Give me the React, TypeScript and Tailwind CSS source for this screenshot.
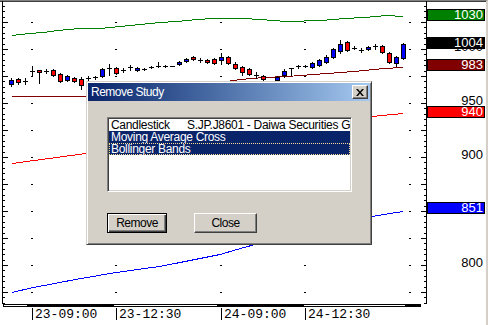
import React from "react";

type Kind = "u" | "d" | "x";
type Candle = [number, Kind, number, number, number, number];

// bar index -> x pixel, price -> y pixel (image coordinates)
const px = (i: number) => 11 + 7 * i;
const py = (p: number) => 49 + (1000 - p) * 1.08;

const candles: Candle[] = [
  [0, "u", 80, 84, 78, 86],
  [1, "d", 79, 82, 78, 84],
  [2, "x", 81, 81, 78, 84],
  [3, "x", 71, 71, 66, 75],
  [4, "d", 70, 72, 70, 83],
  [5, "x", 71, 71, 69, 73],
  [6, "d", 70, 75, 69, 76],
  [7, "d", 74, 81, 73, 82],
  [8, "u", 76, 80, 75, 81],
  [9, "d", 78, 81, 77, 82],
  [10, "d", 79, 85, 77, 89],
  [11, "x", 78, 78, 76, 80],
  [12, "x", 77, 77, 76, 79],
  [13, "u", 69, 76, 68, 77],
  [14, "x", 68, 68, 64, 75],
  [15, "d", 68, 73, 67, 74],
  [16, "x", 70, 70, 68, 72],
  [17, "x", 67, 67, 65, 70],
  [18, "u", 68, 70, 67, 71],
  [19, "x", 69, 69, 68, 70],
  [20, "x", 67, 67, 66, 68],
  [21, "x", 66, 66, 62, 67],
  [22, "x", 66, 66, 65, 67],
  [23, "x", 66, 66, 66, 66],
  [24, "u", 62, 64, 61, 65],
  [25, "u", 59, 61, 58, 62],
  [26, "d", 57, 59, 56, 60],
  [27, "x", 60, 60, 58, 62],
  [28, "d", 60, 62, 59, 63],
  [29, "d", 59, 63, 58, 64],
  [30, "u", 57, 60, 53, 64],
  [31, "d", 57, 63, 56, 64],
  [32, "d", 64, 68, 62, 69],
  [33, "d", 67, 72, 66, 75],
  [34, "d", 69, 74, 68, 75],
  [35, "x", 75, 75, 72, 78],
  [36, "d", 76, 79, 75, 80],
  [38, "u", 77, 80, 76, 81],
  [39, "u", 71, 75, 69, 77],
  [40, "x", 68, 68, 68, 75],
  [41, "x", 66, 66, 65, 68],
  [42, "x", 66, 66, 65, 67],
  [43, "u", 63, 67, 62, 68],
  [44, "u", 60, 65, 59, 66],
  [45, "u", 57, 62, 55, 63],
  [46, "u", 49, 57, 48, 58],
  [47, "u", 44, 51, 40, 53],
  [48, "d", 42, 50, 41, 51],
  [49, "x", 48, 48, 46, 49],
  [50, "x", 50, 50, 48, 52],
  [51, "u", 47, 49, 46, 50],
  [52, "x", 46, 46, 44, 49],
  [53, "d", 46, 52, 45, 53],
  [54, "d", 53, 62, 52, 63],
  [55, "u", 57, 63, 56, 66],
  [56, "u", 44, 58, 43, 59],
];

const lines: { color: string; pts: number[][] }[] = [
  {
    color: "#008000",
    pts: [[12, 35], [30, 33], [43, 32], [58, 30], [80, 28], [100, 28], [120, 26], [140, 24], [160, 22], [177, 21], [197, 19], [213, 18], [244, 18], [260, 19], [287, 21], [321, 20], [345, 18], [364, 17], [387, 15], [403, 16]],
  },
  {
    color: "#800000",
    pts: [[12, 96], [86, 96], [150, 92], [200, 85], [240, 79], [264, 77], [287, 76], [327, 73], [354, 71], [384, 68], [403, 67]],
  },
  {
    color: "#ff0000",
    pts: [[12, 163], [86, 153], [200, 138], [300, 125], [372, 116], [403, 113]],
  },
  {
    color: "#0000ff",
    pts: [[12, 292], [33, 287], [50, 284], [70, 280], [87, 277], [110, 273], [137, 269], [160, 266], [180, 262], [200, 258], [220, 254], [244, 247], [270, 240], [300, 232], [340, 222], [372, 216], [390, 213], [403, 211]],
  },
];

const gridX = [32, 116, 221, 305, 410];
const gridY = [22, 49, 76, 103, 130, 157, 184, 211, 238, 265, 292];

const ticks = Array.from({ length: 57 }, (_, k) => k - 9);

// session band along the time axis: [x1, x2, black?]
const band: [number, number, boolean][] = [
  [3, 28, false],
  [28, 113, true],
  [113, 218, false],
  [218, 303, true],
  [303, 406, false],
  [406, 421, true],
];

const axisLabels = [1000, 950, 900, 850, 800];
const markers = [
  { value: 1030, bg: "bg-[#008000]" },
  { value: 1004, bg: "bg-black" },
  { value: 983, bg: "bg-[#800000]" },
  { value: 940, bg: "bg-[#ff0000]" },
  { value: 851, bg: "bg-[#0000ff]" },
];

const timeLabels = [
  { i: 3, text: "23-09:00" },
  { i: 15, text: "23-12:30" },
  { i: 30, text: "24-09:00" },
  { i: 42, text: "24-12:30" },
];

const studies = [
  { name: "Candlestick", detail: "S.JP.J8601 - Daiwa Securities Group", selected: false, focus: false },
  { name: "Moving Average Cross", detail: "", selected: true, focus: false },
  { name: "Bollinger Bands", detail: "", selected: true, focus: true },
];

function ChartCanvas() {
  return (
    <svg width={486} height={307} viewBox="0 1 486 307" className="block" shapeRendering="crispEdges">
      {/* axes */}
      <line x1={2.5} y1={0} x2={2.5} y2={304} stroke="black" />
      <line x1={426.5} y1={0} x2={426.5} y2={304} stroke="black" />
      {ticks.map((t) => {
        const y = Math.round(49 + 5.4 * t) + 0.5;
        const major = t % 5 === 0;
        return (
          <g key={t}>
            <line x1={2} y1={y} x2={major ? 8 : 5} y2={y} stroke="black" />
            <line x1={major ? 421 : 424} y1={y} x2={427} y2={y} stroke="black" />
          </g>
        );
      })}

      {/* grid dots */}
      {gridX.map((x) =>
        gridY.map((y) => <rect key={`${x}-${y}`} x={x - 1} y={y} width={2} height={1} fill="black" />)
      )}

      {/* studies */}
      {lines.map((l) => (
        <polyline
          key={l.color}
          points={l.pts.map((p) => `${p[0]},${p[1] + 0.5}`).join(" ")}
          fill="none"
          stroke={l.color}
          strokeWidth={1}
        />
      ))}

      {/* candles */}
      {candles.map(([i, kind, top, bottom, wt, wb]) => {
        const x = px(i);
        return (
          <g key={i}>
            <line x1={x + 0.5} y1={wt} x2={x + 0.5} y2={wb + 1} stroke="black" />
            {kind === "x" ? (
              <line x1={x - 2} y1={top + 0.5} x2={x + 3} y2={top + 0.5} stroke="black" />
            ) : (
              <rect
                x={x - 1.5}
                y={top + 0.5}
                width={4}
                height={bottom - top}
                fill={kind === "u" ? "#0000ff" : "#ff0000"}
                stroke="black"
              />
            )}
          </g>
        );
      })}

      {/* session band */}
      <rect x={3} y={304} width={418} height={3} fill="black" />
      {band
        .filter((b) => !b[2])
        .map(([x1, x2]) => (
          <rect key={x1} x={x1 + 1} y={305} width={x2 - x1 - 2} height={1} fill="white" />
        ))}
    </svg>
  );
}

function PriceAxis() {
  return (
    <div className="absolute left-[427px] top-0 w-[59px] h-full font-['Liberation_Sans',Arial,sans-serif] text-[13px]">
      {axisLabels.map((v) => (
        <div
          key={v}
          className="absolute left-0 w-[58px] h-[12px] border border-transparent pr-[1px] text-right leading-[10px] text-black"
          style={{ top: py(v) - 9 }}
        >
          {v}
        </div>
      ))}
      {markers.map((m) => (
        <div
          key={m.value}
          className={`absolute left-0 w-[58px] h-[12px] border border-black pr-[1px] text-right leading-[10px] text-white ${m.bg}`}
          style={{ top: Math.round(py(m.value)) - 9 }}
        >
          {m.value}
        </div>
      ))}
    </div>
  );
}

function CloseGlyph() {
  return (
    <svg width="8" height="7" viewBox="0 0 8 7">
      <path d="M0 0h2l2 2.5L6 0h2L5 3.5 8 7H6L4 4.5 2 7H0l3-3.5z" fill="black" />
    </svg>
  );
}

function RemoveStudyDialog() {
  return (
    <div className="absolute left-[86px] top-[80px] w-[286px] h-[164px] flex flex-col bg-[#d4d0c8] border border-t-[#d4d0c8] border-l-[#d4d0c8] border-r-[#404040] border-b-[#404040] p-px shadow-[inset_1px_1px_0_#fff,inset_-1px_-1px_0_#808080] font-['Liberation_Sans',Arial,sans-serif] text-[12px] tracking-[-0.3px]">
      <div className="h-[18px] flex items-center justify-between bg-linear-to-r from-[#0a246a] to-[#a6caf0] pl-[3px] pr-[2px]">
        <span className="text-white leading-[18px] tracking-[-0.5px]">Remove Study</span>
        <button className="w-[16px] h-[14px] flex items-center justify-center bg-[#d4d0c8] border border-t-white border-l-white border-r-[#404040] border-b-[#404040] shadow-[inset_-1px_-1px_0_#808080]">
          <CloseGlyph />
        </button>
      </div>

      <div className="flex-1 pl-[19px] pt-[16px]">
        <div className="w-[245px] h-[75px] bg-white border border-t-[#808080] border-l-[#808080] border-r-white border-b-white p-px shadow-[inset_1px_1px_0_#404040,inset_-1px_-1px_0_#d4d0c8] overflow-hidden">
          {studies.map((s) => (
            <div
              key={s.name}
              className={`h-[12px] leading-[12px] pl-[2px] flex whitespace-nowrap overflow-hidden ${
                s.selected ? "bg-[#0a246a] text-white" : "text-black"
              } ${s.focus ? "outline-1 outline-dotted outline-[#f5db95] -outline-offset-1" : ""}`}
            >
              {s.detail ? (
                <>
                  <span className="w-[76px] shrink-0">{s.name}</span>
                  <span>{s.detail}</span>
                </>
              ) : (
                <span>{s.name}</span>
              )}
            </div>
          ))}
        </div>

        <div className="flex gap-[27px] mt-[21px] tracking-[-0.5px]">
          <button className="w-[60px] h-[20px] bg-[#d4d0c8] border border-black text-black leading-[18px] shadow-[inset_1px_1px_0_#fff,inset_-1px_-1px_0_#404040,inset_-2px_-2px_0_#808080]">
            Remove
          </button>
          <button className="w-[63px] h-[20px] bg-[#d4d0c8] border border-t-white border-l-white border-r-[#404040] border-b-[#404040] text-black leading-[18px] shadow-[inset_-1px_-1px_0_#808080]">
            Close
          </button>
        </div>
      </div>
    </div>
  );
}

export default function App() {
  return (
    <div className="w-[488px] h-[325px] bg-white border-t border-t-[#808080] border-r-2 border-r-[#d4d0c8] shadow-[inset_0_1px_0_#404040] flex flex-col overflow-hidden">
      <div className="relative h-[307px]">
        <ChartCanvas />
        <PriceAxis />
        <RemoveStudyDialog />
      </div>
      <div className="relative h-[17px] font-['Liberation_Mono',monospace] text-[13px] text-black">
        {timeLabels.map((t) => (
          <div
            key={t.text}
            className="absolute top-0 h-[12px] border-l border-black pl-[2px] leading-[13px]"
            style={{ left: px(t.i) }}
          >
            {t.text}
          </div>
        ))}
      </div>
    </div>
  );
}
